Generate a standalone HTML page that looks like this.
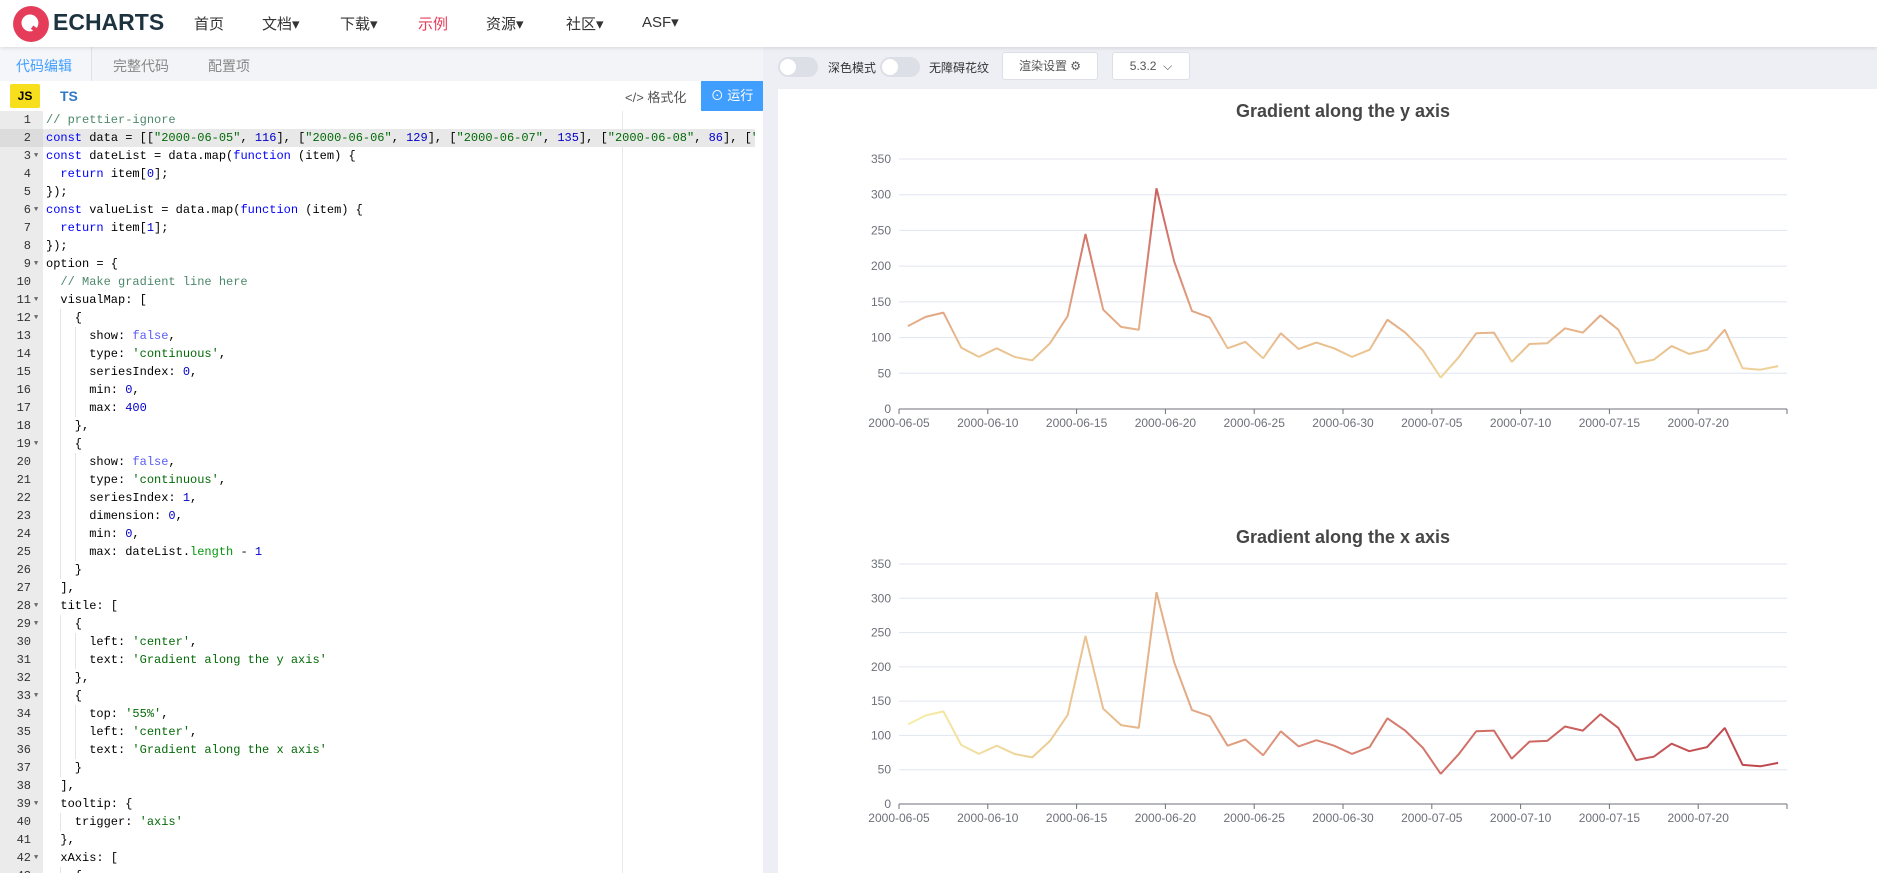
<!DOCTYPE html>
<html><head><meta charset="utf-8">
<style>
*{margin:0;padding:0;box-sizing:border-box}
body{width:1877px;height:873px;overflow:hidden;background:#eeeff5;font-family:"Liberation Sans","Noto Sans CJK SC",sans-serif;position:relative}
.nav{position:absolute;left:0;top:0;width:1877px;height:47px;background:#fff;box-shadow:0 1px 4px rgba(0,0,0,.12);z-index:3}
.nav span{position:absolute;top:13px;font-size:15px;color:#333}
.left{position:absolute;left:0;top:47px;width:763px;height:826px;background:#fff}
.tabs{position:absolute;left:0;top:0;width:763px;height:34px;background:#f3f4f8}
.tabs span{position:absolute;top:9px;font-size:14px;color:#888}
.code{position:absolute;left:0;top:64px;width:755px;height:762px;font-family:"Liberation Mono",monospace;font-size:12px;overflow:hidden}
.gut{position:absolute;left:0;top:0;width:43px;height:762px;background:#ebebeb}
.ln{position:absolute;height:18px;line-height:18px;white-space:pre}
.num{width:31px;text-align:right;color:#333}
.k{color:#0000ff}.s{color:#036a07}.n{color:#0000cd}.b{color:#585cf6}.c{color:#4c886b}.p{color:#06960e}
.right{position:absolute;left:778px;top:89px;width:1099px;height:784px;background:#fff}
.tog{position:absolute;top:57px;width:40px;height:20px;border-radius:10px;background:#dcdfe6}
.tog:after{content:"";position:absolute;left:2px;top:2px;width:16px;height:16px;border-radius:50%;background:#fff}
.tl{position:absolute;top:59px;font-size:12px;color:#333}
.btn{position:absolute;top:52px;height:28px;border:1px solid #dcdfe6;background:#fff;border-radius:3px;font-size:12px;color:#555;text-align:center;line-height:26px}
</style></head><body>
<div class="nav">
  <svg style="position:absolute;left:12px;top:5px" width="38" height="38" viewBox="0 0 36 36"><circle cx="18" cy="18" r="17" fill="#e43c59"/><circle cx="17" cy="17" r="8" fill="#fff"/><path d="M19 21 L27 27" stroke="#e43c59" stroke-width="4"/></svg>
  <span style="left:53px;top:9px;font-size:23px;font-weight:bold;color:#1e3340">ECHARTS</span>
  <span style="left:194px">首页</span>
  <span style="left:262px">文档▾</span>
  <span style="left:340px">下载▾</span>
  <span style="left:418px;color:#e43c59">示例</span>
  <span style="left:486px">资源▾</span>
  <span style="left:566px">社区▾</span>
  <span style="left:642px">ASF▾</span>
</div>
<div class="left">
  <div class="tabs">
    <div style="position:absolute;left:0;top:0;width:92px;height:34px;background:#f5f6fa;border-right:1px solid #e0e0e6"></div>
    <span style="left:16px;color:#409eff">代码编辑</span>
    <span style="left:113px">完整代码</span>
    <span style="left:208px">配置项</span>
  </div>
  <div style="position:absolute;left:10px;top:37px;width:30px;height:24px;background:#f7df1e;border-radius:2px;font-size:12px;font-weight:bold;text-align:center;line-height:24px">JS</div>
  <div style="position:absolute;left:60px;top:41px;font-size:14px;font-weight:bold;color:#3178c6">TS</div>
  <div style="position:absolute;left:625px;top:40px;font-size:13px;color:#555">&lt;/&gt; 格式化</div>
  <div style="position:absolute;left:701px;top:34px;width:62px;height:30px;background:#409eff;color:#fff;font-size:13px;line-height:30px;text-align:center">⊙ 运行</div>
  <div class="code" id="code"><div class="gut"></div>
    <div style="position:absolute;left:43px;top:18px;width:712px;height:18px;background:#e8e8e8"></div>
    <div style="position:absolute;left:0;top:18px;width:43px;height:18px;background:#dcdcdc"></div>
    <div style="position:absolute;left:622px;top:0;width:1px;height:762px;background:#e8e8e8"></div>
    <div style="position:absolute;left:755px;top:0;width:8px;height:467px;background:#888;border-radius:0 0 2px 2px"></div>
  </div>
</div>
<div class="tog" style="left:778px"></div><div class="tl" style="left:828px">深色模式</div>
<div class="tog" style="left:880px"></div><div class="tl" style="left:929px">无障碍花纹</div>
<div class="btn" style="left:1002px;width:96px">渲染设置 ⚙</div>
<div class="btn" style="left:1112px;width:78px">5.3.2 &nbsp;⌵</div>
<div class="right"></div>
<svg id="ch" style="position:absolute;left:0;top:0" width="1877" height="873"></svg>
<script>
var L=[
['// prettier-ignore','c'],
['<span class="k">const</span> data = [[<span class="s">"2000-06-05"</span>, <span class="n">116</span>], [<span class="s">"2000-06-06"</span>, <span class="n">129</span>], [<span class="s">"2000-06-07"</span>, <span class="n">135</span>], [<span class="s">"2000-06-08"</span>, <span class="n">86</span>], [<span class="s">"</span>'],
['<span class="k">const</span> dateList = data.map(<span class="k">function</span> (item) {',1],
['  <span class="k">return</span> item[<span class="n">0</span>];'],
['});'],
['<span class="k">const</span> valueList = data.map(<span class="k">function</span> (item) {',1],
['  <span class="k">return</span> item[<span class="n">1</span>];'],
['});'],
['option = {',1],
['  <span class="c">// Make gradient line here</span>'],
['  visualMap: [',1],
['    {',1],
['      show: <span class="b">false</span>,'],
['      type: <span class="s">\'continuous\'</span>,'],
['      seriesIndex: <span class="n">0</span>,'],
['      min: <span class="n">0</span>,'],
['      max: <span class="n">400</span>'],
['    },'],
['    {',1],
['      show: <span class="b">false</span>,'],
['      type: <span class="s">\'continuous\'</span>,'],
['      seriesIndex: <span class="n">1</span>,'],
['      dimension: <span class="n">0</span>,'],
['      min: <span class="n">0</span>,'],
['      max: dateList.<span class="p">length</span> - <span class="n">1</span>'],
['    }'],
['  ],'],
['  title: [',1],
['    {',1],
['      left: <span class="s">\'center\'</span>,'],
['      text: <span class="s">\'Gradient along the y axis\'</span>'],
['    },'],
['    {',1],
['      top: <span class="s">\'55%\'</span>,'],
['      left: <span class="s">\'center\'</span>,'],
['      text: <span class="s">\'Gradient along the x axis\'</span>'],
['    }'],
['  ],'],
['  tooltip: {',1],
['    trigger: <span class="s">\'axis\'</span>'],
['  },'],
['  xAxis: [',1],
['    {']
];
var h='';
L.forEach(function(l,i){var t=l[0];if(l[1]==='c')t='<span class="c">'+t+'</span>';
var y=i*18;
h+='<div class="ln num" style="left:0;top:'+y+'px">'+(i+1)+'</div>';
if(l[1]===1)h+='<div class="ln" style="left:34px;top:'+y+'px;font-size:7px;color:#666">▼</div>';
h+='<div class="ln" style="left:46px;top:'+y+'px">'+t+'</div>';
var ind=t.match(/^ */)[0].length;
for(var g=2;g<ind;g+=2){h+='<div style="position:absolute;left:'+(46+g/2*14.4)+'px;top:'+y+'px;width:1px;height:18px;background:#e4e4e4"></div>';}
});
document.getElementById('code').insertAdjacentHTML('beforeend',h);

var D=[116,129,135,86,73,85,73,68,92,130,245,139,115,111,309,206,137,128,85,94,71,106,84,93,85,73,83,125,107,82,44,72,106,107,66,91,92,113,107,131,111,64,69,88,77,83,111,57,55,60];
var s='<defs><linearGradient id="gy" gradientUnits="userSpaceOnUse" x1="0" y1="409" x2="0" y2="123"><stop offset="0" stop-color="#f6efa6"/><stop offset="0.5" stop-color="#d88273"/><stop offset="1" stop-color="#bf444c"/></linearGradient><linearGradient id="gx" gradientUnits="userSpaceOnUse" x1="908" y1="0" x2="1778" y2="0"><stop offset="0" stop-color="#f6efa6"/><stop offset="0.5" stop-color="#d88273"/><stop offset="1" stop-color="#bf444c"/></linearGradient></defs>';
var dates=['2000-06-05','2000-06-10','2000-06-15','2000-06-20','2000-06-25','2000-06-30','2000-07-05','2000-07-10','2000-07-15','2000-07-20'];
function chart(top,bot,title,ty,grad){
  var x0=899,x1=1787,cw=(x1-x0)/50,u=(bot-top)/350;
  s+='<text x="1343" y="'+ty+'" text-anchor="middle" font-size="18" font-weight="bold" fill="#464646" font-family="Liberation Sans, sans-serif" dominant-baseline="middle">'+title+'</text>';
  for(var v=0;v<=350;v+=50){var y=bot-v*u;
    if(v>0)s+='<line x1="'+x0+'" x2="'+x1+'" y1="'+y+'" y2="'+y+'" stroke="#e0e6f1"/>';
    s+='<text x="891" y="'+(y+4)+'" text-anchor="end" font-size="12" fill="#6e7079" font-family="Liberation Sans, sans-serif">'+v+'</text>';}
  s+='<line x1="'+x0+'" x2="'+x1+'" y1="'+bot+'" y2="'+bot+'" stroke="#6e7079"/>';
  for(var i=0;i<=50;i++){var x=x0+i*cw;if(i%5==0||i==50)s+='<line x1="'+x+'" x2="'+x+'" y1="'+bot+'" y2="'+(bot+5)+'" stroke="#6e7079"/>';}
  for(var j=0;j<10;j++){s+='<text x="'+(x0+j*5*cw)+'" y="'+(bot+18)+'" text-anchor="middle" font-size="12" fill="#6e7079" font-family="Liberation Sans, sans-serif">'+dates[j]+'</text>';}
  var p=D.map(function(v,i){return (x0+(i+.5)*cw).toFixed(1)+','+(bot-v*u).toFixed(1)}).join(' ');
  s+='<polyline points="'+p+'" fill="none" stroke="url(#'+grad+')" stroke-width="2" stroke-linejoin="bevel"/>';
}
chart(159,409,'Gradient along the y axis',112,'gy');
chart(564,804,'Gradient along the x axis',538,'gx');
document.getElementById('ch').innerHTML=s;
</script>
</body></html>
